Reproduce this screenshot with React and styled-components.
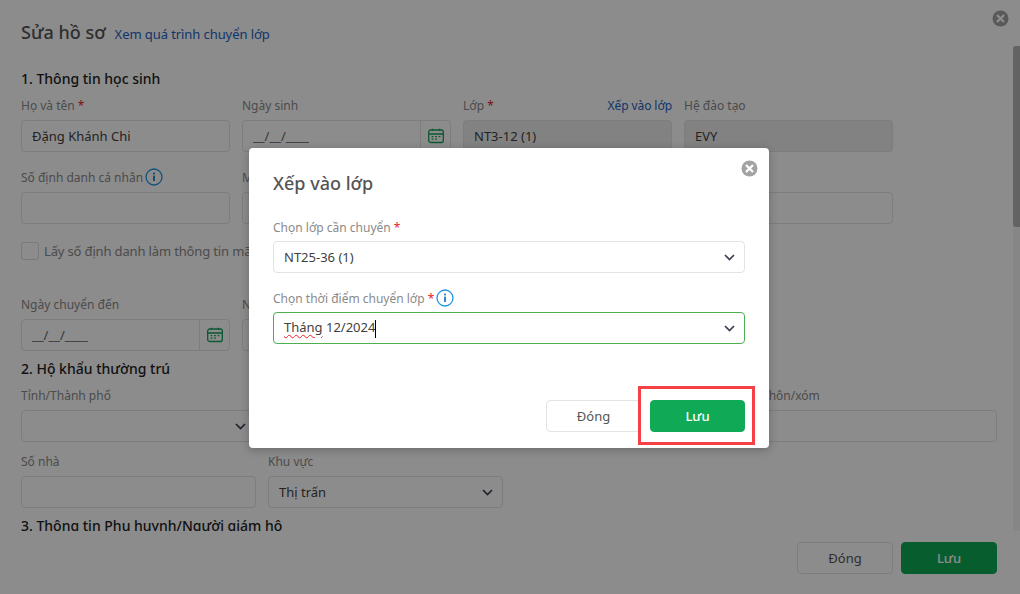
import React from "react";
import styled, { createGlobalStyle } from "styled-components";

const GlobalStyle = createGlobalStyle`
  html, body {
    margin: 0;
    padding: 0;
    height: 100%;
    overflow: hidden;
    background: #fff;
    font-family: "Noto Sans", "Open Sans", sans-serif;
    font-size: 13px;
    color: #333;
  }
  * { box-sizing: border-box; }
`;

const Page = styled.div`
  height: 594px;
  display: flex;
  flex-direction: column;
  position: relative;
  overflow: hidden;
`;

const Header = styled.div`
  height: 46px;
  flex: none;
  display: flex;
  align-items: baseline;
  padding: 20px 21px 0;
  gap: 9px;
`;

const PageTitle = styled.h1`
  margin: 0;
  font-size: 18px;
  font-weight: 500;
  line-height: 25px;
  color: #555;
`;

const TextLink = styled.a`
  color: #1d63c4;
  font-size: ${(p) => p.$size || 13}px;
  white-space: nowrap;
  letter-spacing: -0.08px;
`;

const CloseSpot = styled.span`
  position: absolute;
  top: ${(p) => p.$top}px;
  right: ${(p) => p.$right}px;
  width: 17px;
  height: 17px;
  display: block;
`;

const Scroller = styled.div`
  height: 485px;
  flex: none;
  overflow: hidden;
  padding: 0 23px 0 21px;
  position: relative;
`;

const ScrollTrack = styled.div`
  position: absolute;
  top: 0;
  right: 0;
  bottom: 0;
  width: 7px;
  background: #f4f4f4;
`;

const ScrollThumb = styled.div`
  position: absolute;
  top: 0;
  right: 0;
  width: 7px;
  height: 181px;
  background: #b5b5b5;
  border-radius: 3px 0 0 3px;
`;

const SectionTitle = styled.h2`
  margin: ${(p) => p.$top}px 0 0;
  font-size: 14px;
  font-weight: 500;
  line-height: 20px;
  color: #222;
`;

const FormRow = styled.div`
  display: grid;
  grid-template-columns: repeat(4, ${(p) => p.$col}px);
  gap: 12px;
  margin-top: ${(p) => p.$top}px;
`;

const Field = styled.div`
  display: flex;
  flex-direction: column;
  min-width: 0;
`;

const LabelRow = styled.div`
  height: 30px;
  display: flex;
  align-items: center;
  justify-content: space-between;
  color: #8a8a8a;
  font-size: 12px;
  white-space: nowrap;
`;

const LabelText = styled.span`
  display: inline-flex;
  align-items: center;
  gap: 2px;
`;

const Required = styled.span`
  color: #e8202a;
`;

const Input = styled.div`
  height: 32px;
  border: 1px solid ${(p) => (p.$focus ? "#4caf50" : "#e3e3e3")};
  border-radius: 4px;
  background: ${(p) => (p.$disabled ? "#ededed" : "#fff")};
  display: flex;
  align-items: center;
  padding: 0 9px 0 10px;
  color: #3f3f3f;
  font-size: 13px;
  justify-content: space-between;
  white-space: nowrap;
`;

const DateInput = styled(Input)`
  padding: 0 0 0 10px;
  color: #666;
`;

const CalendarCell = styled.span`
  width: 30px;
  height: 100%;
  flex: none;
  border-left: 1px solid #e3e3e3;
  display: flex;
  align-items: center;
  justify-content: center;
`;

const CheckRow = styled.div`
  display: flex;
  align-items: center;
  gap: 5px;
  margin-top: 17px;
  height: 20px;
  color: #8a8a8a;
  font-size: 13px;
  letter-spacing: -0.15px;
`;

const CheckBox = styled.span`
  width: 18px;
  height: 18px;
  border: 1px solid #dcdcdc;
  border-radius: 3px;
  display: block;
`;

const Footer = styled.div`
  flex: 1;
  display: flex;
  justify-content: flex-end;
  gap: 8px;
  padding: 11px 23px 0 0;
`;

const Button = styled.button`
  width: 96px;
  height: 32px;
  border-radius: 4px;
  border: 1px solid ${(p) => (p.$primary ? "#10a955" : "#e3e3e3")};
  background: ${(p) => (p.$primary ? "#10a955" : "#fff")};
  color: ${(p) => (p.$primary ? "#fff" : "#555")};
  font-family: inherit;
  font-size: 13px;
  font-weight: ${(p) => (p.$primary ? 500 : 400)};
  padding: 0;
`;

const Overlay = styled.div`
  position: absolute;
  inset: 0;
  background: rgba(0, 0, 0, 0.45);
  padding: 148px 0 0 249px;
`;

const Modal = styled.div`
  width: 520px;
  height: 300px;
  background: #fff;
  border-radius: 4px;
  box-shadow: 0 2px 8px rgba(0, 0, 0, 0.25);
  padding: 23px 24px 16px;
  display: flex;
  flex-direction: column;
  position: relative;
`;

const ModalTitle = styled.h3`
  margin: 0 0 21px;
  font-size: 18px;
  font-weight: 500;
  line-height: 25px;
  color: #555;
`;

const ModalField = styled(Field)`
  margin-bottom: 15px;
`;

const ModalLabel = styled(LabelRow)`
  height: 24px;
  padding-bottom: 4px;
`;

const Squiggle = styled.span`
  text-decoration: underline wavy #e8202a 1px;
  text-underline-offset: 2px;
`;

const Caret = styled.span`
  display: inline-block;
  width: 1px;
  height: 18px;
  background: #000;
  vertical-align: middle;
`;

const ModalFooter = styled.div`
  margin-top: auto;
  display: flex;
  justify-content: flex-end;
  gap: 9px;
`;

const ModalButton = styled(Button)`
  width: 95px;
`;

const Highlight = styled.div`
  position: absolute;
  left: 389px;
  top: 238px;
  width: 117px;
  height: 59px;
  border: 3px solid #f54045;
`;

const CalendarIcon = () => (
  <svg width="16" height="16" viewBox="0 0 16 16" fill="none" stroke="#14a05a" strokeWidth="1.3">
    <rect x="0.7" y="2" width="14.6" height="12.5" rx="2" />
    <path d="M0.7 6h14.6M4.5 0.8v2M11.5 0.8v2" />
    <path d="M3.6 8.6h1.8M7.1 8.6h1.8M10.6 8.6h1.8M3.6 11.2h1.8M7.1 11.2h1.8" />
  </svg>
);

const InfoIcon = () => (
  <svg width="18" height="18" viewBox="0 0 18 18" fill="none">
    <circle cx="9" cy="9" r="8" stroke="#1f96e0" strokeWidth="1.3" />
    <rect x="8.1" y="7.6" width="1.8" height="5.4" fill="#1a7fc4" />
    <rect x="8.1" y="4.6" width="1.8" height="1.8" fill="#1a7fc4" />
  </svg>
);

const Chevron = () => (
  <svg width="11" height="7" viewBox="0 0 11 7" fill="none" stroke="#3c3c50" strokeWidth="1.7">
    <path d="M1 1l4.5 4.5L10 1" />
  </svg>
);

const CloseIcon = () => (
  <svg width="17" height="17" viewBox="0 0 17 17">
    <circle cx="8.5" cy="8.5" r="8" fill="#a3a3a3" />
    <path d="M5 5l7 7M12 5l-7 7" stroke="#fff" strokeWidth="2.3" />
  </svg>
);

const Label = ({ text, required, info, link }) => (
  <LabelRow>
    <LabelText>
      <span>
        {text}
        {required && <Required> *</Required>}
      </span>
      {info && <InfoIcon />}
    </LabelText>
    {link && <TextLink $size={12}>{link}</TextLink>}
  </LabelRow>
);

const DateField = ({ label }) => (
  <Field>
    <Label text={label} />
    <DateInput>
      <span>__/__/____</span>
      <CalendarCell>
        <CalendarIcon />
      </CalendarCell>
    </DateInput>
  </Field>
);

export default function App() {
  return (
    <Page>
      <GlobalStyle />
      <Header>
        <PageTitle>Sửa hồ sơ</PageTitle>
        <TextLink>Xem quá trình chuyển lớp</TextLink>
      </Header>
      <CloseSpot $top={10} $right={11}>
        <CloseIcon />
      </CloseSpot>

      <Scroller>
        <ScrollTrack />
        <ScrollThumb />
        <SectionTitle $top={23}>1. Thông tin học sinh</SectionTitle>
        <FormRow $col={209} $top={1}>
          <Field>
            <Label text="Họ và tên" required />
            <Input>Đặng Khánh Chi</Input>
          </Field>
          <DateField label="Ngày sinh" />
          <Field>
            <Label text="Lớp" required link="Xếp vào lớp" />
            <Input $disabled>NT3-12 (1)</Input>
          </Field>
          <Field>
            <Label text="Hệ đào tạo" />
            <Input $disabled>EVY</Input>
          </Field>
        </FormRow>
        <FormRow $col={209} $top={10}>
          <Field>
            <Label text="Số định danh cá nhân" info />
            <Input />
          </Field>
          <Field>
            <Label text="M" />
            <Input />
          </Field>
          <Field>
            <Label />
            <Input />
          </Field>
          <Field>
            <Label />
            <Input />
          </Field>
        </FormRow>
        <CheckRow>
          <CheckBox />
          Lấy số định danh làm thông tin mã
        </CheckRow>
        <FormRow $col={209} $top={28}>
          <DateField label="Ngày chuyển đến" />
          <Field>
            <Label text="N" />
            <Input />
          </Field>
        </FormRow>
        <SectionTitle $top={8}>2. Hộ khẩu thường trú</SectionTitle>
        <FormRow $col={235} $top={1}>
          <Field>
            <Label text="Tỉnh/Thành phố" />
            <Input>
              <span />
              <Chevron />
            </Input>
          </Field>
          <Field>
            <Label />
            <Input />
          </Field>
          <Field>
            <Label />
            <Input />
          </Field>
          <Field>
            <Label text="Thôn/xóm" />
            <Input />
          </Field>
        </FormRow>
        <FormRow $col={235} $top={4}>
          <Field>
            <Label text="Số nhà" />
            <Input />
          </Field>
          <Field>
            <Label text="Khu vực" />
            <Input>
              Thị trấn
              <Chevron />
            </Input>
          </Field>
        </FormRow>
        <SectionTitle $top={8}>3. Thông tin Phụ huynh/Người giám hộ</SectionTitle>
      </Scroller>

      <Footer>
        <Button>Đóng</Button>
        <Button $primary>Lưu</Button>
      </Footer>

      <Overlay>
        <Modal>
          <ModalTitle>Xếp vào lớp</ModalTitle>
          <CloseSpot $top={12} $right={11}>
            <CloseIcon />
          </CloseSpot>
          <ModalField>
            <ModalLabel>
              <span>
                Chọn lớp cần chuyển<Required> *</Required>
              </span>
            </ModalLabel>
            <Input>
              NT25-36 (1)
              <Chevron />
            </Input>
          </ModalField>
          <ModalField>
            <ModalLabel>
              <LabelText>
                <span>
                  Chọn thời điểm chuyển lớp<Required> *</Required>
                </span>
                <InfoIcon />
              </LabelText>
            </ModalLabel>
            <Input $focus>
              <span>
                <Squiggle>Tháng</Squiggle> 12/2024
                <Caret />
              </span>
              <Chevron />
            </Input>
          </ModalField>
          <ModalFooter>
            <ModalButton>Đóng</ModalButton>
            <ModalButton $primary>Lưu</ModalButton>
          </ModalFooter>
          <Highlight />
        </Modal>
      </Overlay>
    </Page>
  );
}
